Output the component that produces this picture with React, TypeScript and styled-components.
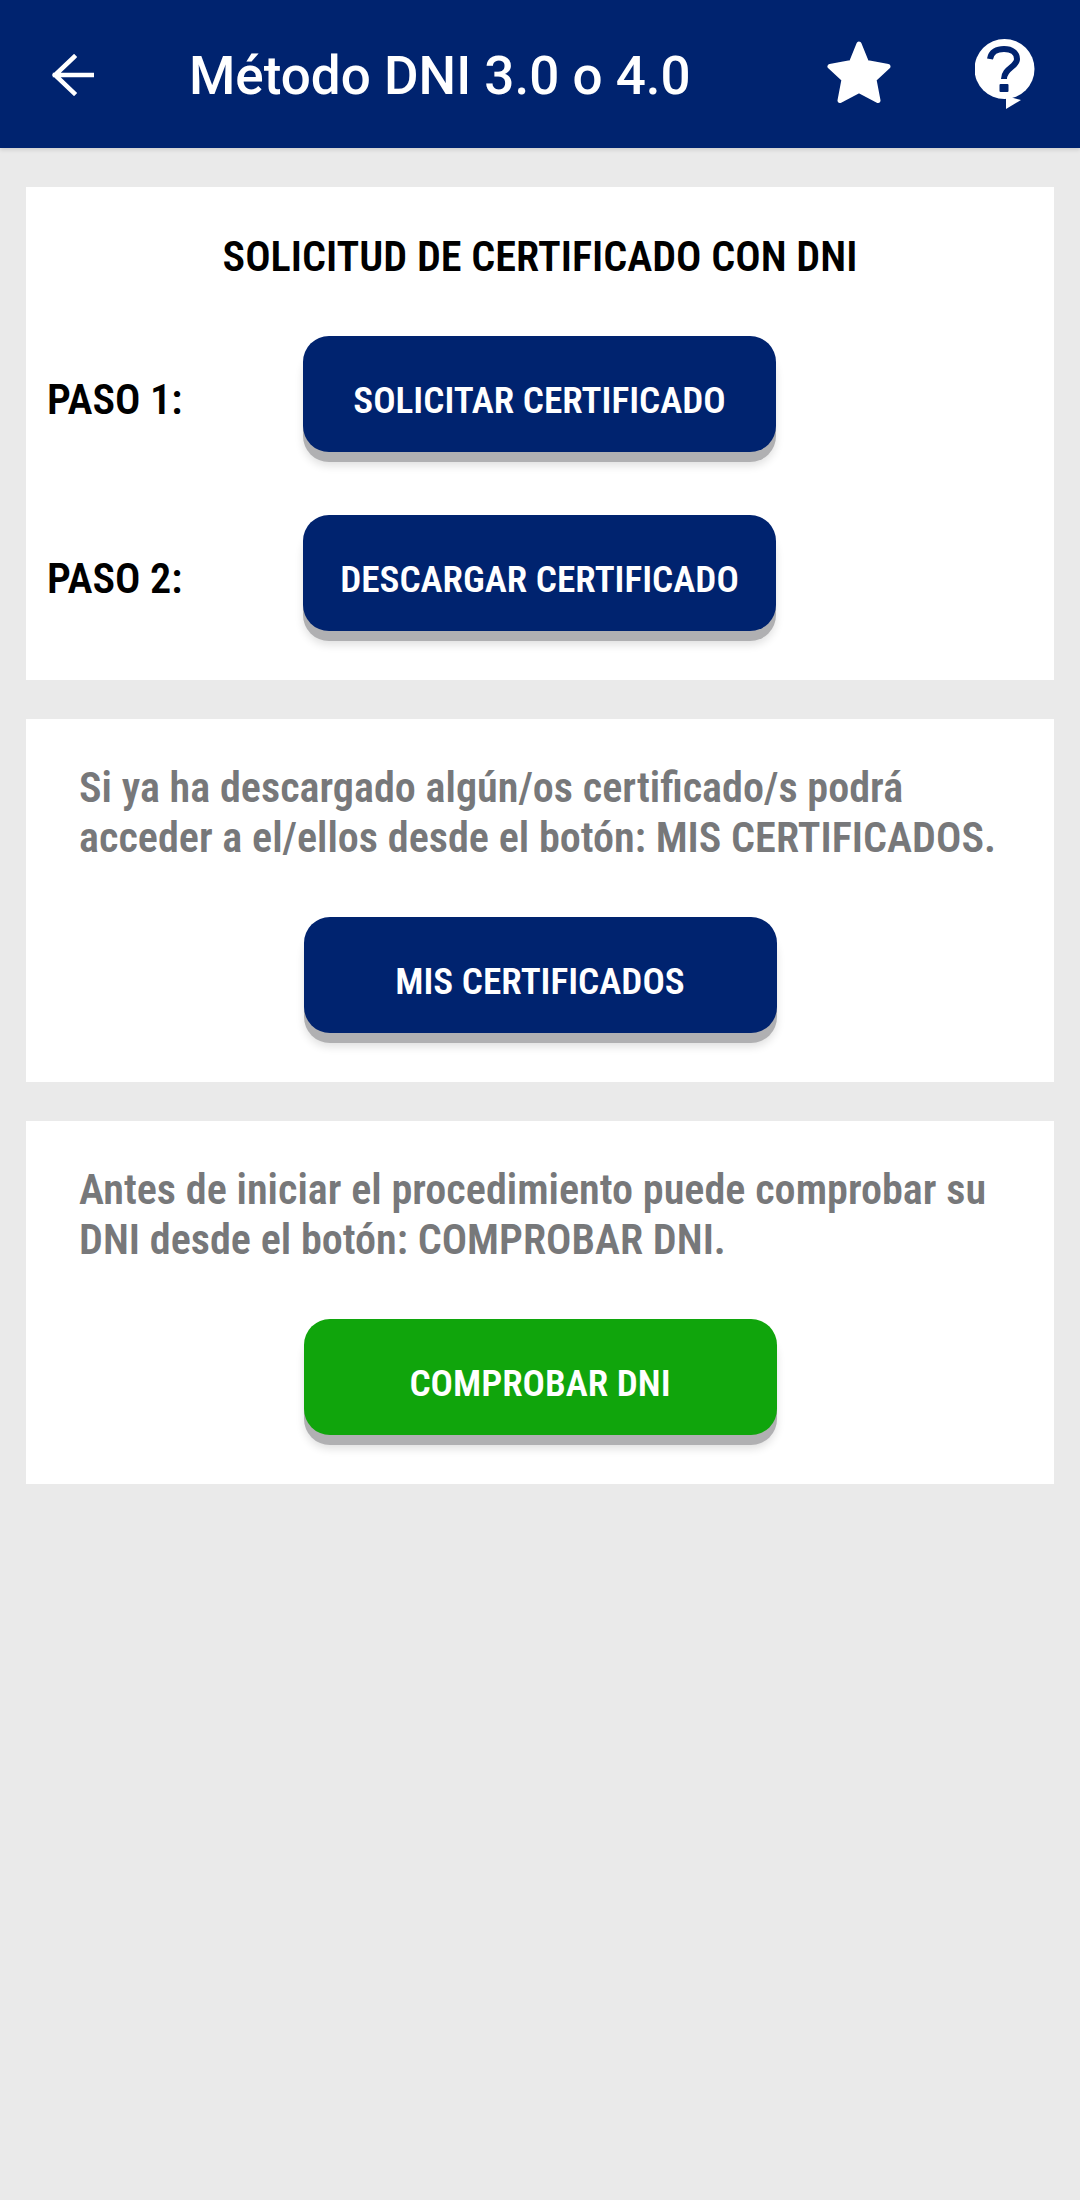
import React from "react";
import styled, { createGlobalStyle } from "styled-components";

const Global = createGlobalStyle`
  html, body { margin: 0; padding: 0; background: #eaeaea; }
  * { box-sizing: border-box; }
`;
const Page = styled.div`
  width: 1080px; height: 2200px; background: #eaeaea; overflow: hidden;
  font-family: "Roboto", sans-serif;
`;
const Header = styled.header`
  height: 148px; background: #00236f; display: flex; align-items: center;
  padding-left: 52px; color: #fff;
  box-shadow: 0 2px 4px rgba(0,0,0,.12);
`;
const BackBtn = styled.div`width: 42px; height: 42px; display: flex; margin-top: 1px;`;
const Title = styled.h1`
  margin: 4px 0 0 95px; flex: 1; font-size: 53px; font-weight: 500; line-height: 60px; white-space: nowrap;
`;
const StarBtn = styled.div`display: flex; width: 64px; height: 64px; margin-right: 84px; margin-top: -2px;`;
const HelpBtn = styled.div`display: flex; width: 62px; height: 72px; margin-right: 43px; margin-top: 0;`;
const Content = styled.main`
  padding: 39px 26px 0; display: flex; flex-direction: column; gap: 39px;
`;
const Card = styled.section<{ $h: number; $pt: number }>`
  background: #fff; height: ${p => p.$h}px; padding-top: ${p => p.$pt}px;
  display: flex; flex-direction: column;
`;
const CardTitle = styled.h2`
  margin: 1px 0 59px; text-align: center; font-size: 42.2px; line-height: 40px; font-weight: 560; color: #000;
  font-stretch: 75%; white-space: nowrap;
`;
const StepRow = styled.div`
  display: flex; align-items: center; height: 116px; position: relative; margin-bottom: 63px;
  padding-left: 277px;
`;
const StepLabel = styled.span`
  position: absolute; left: 21px; top: 42px; font-size: 42.2px; line-height: 44px; font-weight: 560; color: #000;
  font-stretch: 75%;
`;
const Button = styled.button<{ $bg: string }>`
  width: 473px; height: 116px; border: 0; border-radius: 26px; background: ${p => p.$bg};
  color: #fff; font-family: inherit; font-size: 37.200px; font-weight: 560; font-stretch: 75%;
  box-shadow: 0 10px 0 #b0b0b2, 0 14px 8px rgba(0,0,0,.12); padding: 12px 0 0;
`;
const Para = styled.p`
  margin: 0 0 54px 53px; font-size: 42.2px; line-height: 50px; font-weight: 560; color: #77787a;
  font-stretch: 75%; white-space: nowrap;
`;
const Centered = styled.div`display: flex; justify-content: center;`;

export default function App() {
  return (
    <Page>
      <Global />
      <Header>
        <BackBtn>
          <svg width="42" height="42" viewBox="0 0 42 42" fill="none" stroke="#fff" strokeWidth="4.500" strokeLinecap="square">
            <path d="M3 21h37M22 3 3 21l19 18" />
          </svg>
        </BackBtn>
        <Title>Método DNI 3.0 o 4.0</Title>
        <StarBtn>
          <svg width="64" height="64" viewBox="0 0 64 64" fill="#fff" stroke="#fff" strokeWidth="5" strokeLinejoin="round">
            <path d="M32 3 39.500 21.500 61 25.500 47 38.500 51 59.500 32 49.500 13 59.500 17 38.500 3 25.500 24.500 21.500Z" />
          </svg>
        </StarBtn>
        <HelpBtn>
          <svg width="62" height="72" viewBox="0 0 62 72">
            <circle cx="29.500" cy="31" r="30" fill="#fff" />
            <path fill="#fff" d="M31 58v13l15-9Z" />
            <path fill="none" stroke="#00236f" strokeWidth="6" d="M15 21c1-7 7-10 14-10 8 0 13 4 13 10 0 8-13 9-13 20" />
            <rect x="24.500" y="46" width="9" height="8" rx="1" fill="#00236f" />
          </svg>
        </HelpBtn>
      </Header>
      <Content>
        <Card $h={493} $pt={49}>
          <CardTitle>SOLICITUD DE CERTIFICADO CON DNI</CardTitle>
          <StepRow>
            <StepLabel>PASO 1:</StepLabel>
            <Button $bg="#00236f">SOLICITAR CERTIFICADO</Button>
          </StepRow>
          <StepRow>
            <StepLabel>PASO 2:</StepLabel>
            <Button $bg="#00236f">DESCARGAR CERTIFICADO</Button>
          </StepRow>
        </Card>
        <Card $h={363} $pt={44}>
          <Para>Si ya ha descargado algún/os certificado/s podrá<br />acceder a el/ellos desde el botón: MIS CERTIFICADOS.</Para>
          <Centered><Button $bg="#00236f">MIS CERTIFICADOS</Button></Centered>
        </Card>
        <Card $h={363} $pt={44}>
          <Para>Antes de iniciar el procedimiento puede comprobar su<br />DNI desde el botón: COMPROBAR DNI.</Para>
          <Centered><Button $bg="#10a50c">COMPROBAR DNI</Button></Centered>
        </Card>
      </Content>
    </Page>
  );
}
